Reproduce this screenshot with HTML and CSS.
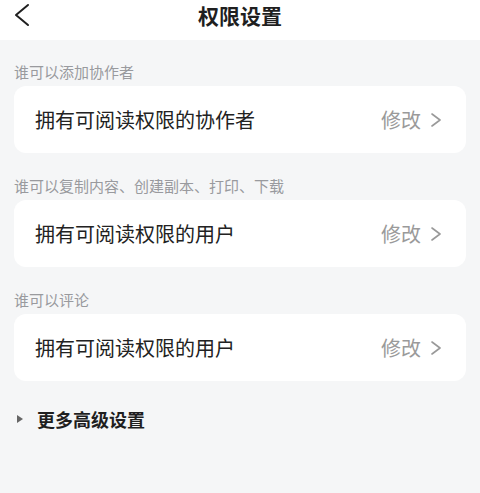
FILE: index.html
```html
<!DOCTYPE html>
<html lang="zh-CN">
<head>
<meta charset="utf-8">
<link rel="stylesheet" href="styles.css">
</head>
<body>
<header class="nav">
  <svg class="back" width="20" height="24" viewBox="0 0 20 24"><polyline points="14,2 2,12 14,22" fill="none" stroke="#1f1f1f" stroke-width="2" stroke-linecap="round" stroke-linejoin="round"/></svg>
  <h1 class="title">权限设置</h1>
</header>
<main class="content">
  <section class="group">
    <div class="label">谁可以添加协作者</div>
    <div class="card">
      <span class="value">拥有可阅读权限的协作者</span>
      <span class="action">修改<svg class="arrow" width="12" height="14" viewBox="0 0 12 14"><polyline points="2,1 10,7 2,13" fill="none" stroke="#999" stroke-width="1.6" stroke-linecap="round" stroke-linejoin="round"/></svg></span>
    </div>
  </section>
  <section class="group">
    <div class="label">谁可以复制内容、创建副本、打印、下载</div>
    <div class="card">
      <span class="value">拥有可阅读权限的用户</span>
      <span class="action">修改<svg class="arrow" width="12" height="14" viewBox="0 0 12 14"><polyline points="2,1 10,7 2,13" fill="none" stroke="#999" stroke-width="1.6" stroke-linecap="round" stroke-linejoin="round"/></svg></span>
    </div>
  </section>
  <section class="group">
    <div class="label">谁可以评论</div>
    <div class="card">
      <span class="value">拥有可阅读权限的用户</span>
      <span class="action">修改<svg class="arrow" width="12" height="14" viewBox="0 0 12 14"><polyline points="2,1 10,7 2,13" fill="none" stroke="#999" stroke-width="1.6" stroke-linecap="round" stroke-linejoin="round"/></svg></span>
    </div>
  </section>
  <div class="more">
    <span class="tri"></span>
    <span class="more-text">更多高级设置</span>
  </div>
</main>
</body>
</html>
```
FILE: styles.css
```css
html, body {
  margin: 0;
  padding: 0;
}
body {
  width: 480px;
  height: 493px;
  overflow: hidden;
  background: #f5f6f7;
  font-family: "Noto Sans CJK SC", "Noto Sans", sans-serif;
  color: #1f1f1f;
}
.nav {
  height: 40px;
  background: #ffffff;
  position: relative;
  display: flex;
  justify-content: center;
  align-items: flex-start;
}
.back {
  position: absolute;
  left: 14px;
  top: 3px;
}
.title {
  margin: 0;
  font-size: 21px;
  font-weight: 700;
  line-height: 30px;
  color: #1f1f1f;
}
.content {
  padding: 22px 14px 0;
  display: flex;
  flex-direction: column;
  gap: 23px;
}
.group {
  display: flex;
  flex-direction: column;
  gap: 4px;
}
.label {
  font-size: 15px;
  line-height: 20px;
  color: #999a9e;
}
.card {
  height: 67px;
  background: #ffffff;
  border-radius: 12px;
  display: flex;
  align-items: center;
  justify-content: space-between;
  padding: 0 24px 0 21px;
}
.value {
  font-size: 20px;
  line-height: 28px;
  color: #222222;
}
.action {
  display: flex;
  align-items: center;
  gap: 9px;
  font-size: 20px;
  line-height: 28px;
  color: #9a9a9a;
}
.arrow {
  display: block;
}
.more {
  display: flex;
  align-items: center;
  gap: 14px;
  padding-left: 3px;
  margin-top: 3px;
}
.tri {
  width: 0;
  height: 0;
  border-top: 4px solid transparent;
  border-bottom: 4px solid transparent;
  border-left: 6px solid #666666;
}
.more-text {
  font-size: 18px;
  line-height: 24px;
  font-weight: 700;
  color: #1f1f1f;
}
```
